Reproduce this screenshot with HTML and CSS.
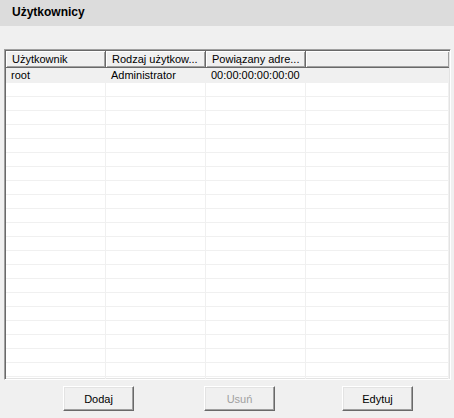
FILE: index.html
```html
<!DOCTYPE html>
<html>
<head>
<meta charset="utf-8">
<link rel="stylesheet" href="styles.css">
</head>
<body>
<div class="title">Użytkownicy</div>
<div class="panel">
  <div class="list">
    <div class="hdr">Użytkownik</div>
    <div class="hdr">Rodzaj użytkow...</div>
    <div class="hdr">Powiązany adre...</div>
    <div class="hdr last"></div>
    <div class="cell sel">root</div>
    <div class="cell sel">Administrator</div>
    <div class="cell sel">00:00:00:00:00:00</div>
    <div class="cell sel"></div>
  </div>
  <div class="rows" id="rows"></div>
</div>
<div class="buttons">
  <button class="btn b1">Dodaj</button>
  <button class="btn b2" disabled>Usuń</button>
  <button class="btn b3">Edytuj</button>
</div>
<script>
  var r = document.getElementById('rows');
  var h = '';
  for (var i = 0; i < 22; i++) {
    h += '<div class="cell"></div><div class="cell"></div><div class="cell"></div><div class="cell"></div>';
  }
  r.innerHTML = h;
</script>
</body>
</html>
```
FILE: styles.css
```css
html, body {
  margin: 0;
  padding: 0;
  background: #f0f0f0;
  font-family: "Liberation Sans", Arial, sans-serif;
  font-size: 11px;
  color: #000;
}
.title {
  height: 26px;
  line-height: 25px;
  background: #dcdcdc;
  font-weight: bold;
  font-size: 12px;
  padding-left: 12px;
}
.panel {
  margin: 23px 0 0 4px;
  width: 443px;
  height: 327px;
  background: #fff;
  border-top: 1px solid #a0a0a0;
  border-left: 1px solid #a0a0a0;
  border-right: 1px solid #fff;
  border-bottom: 1px solid #fff;
  box-shadow: inset 1px 1px 0 #696969, inset -1px -1px 0 #e3e3e3;
  padding: 1px;
  overflow: hidden;
  box-sizing: content-box;
}
.list, .rows {
  display: grid;
  grid-template-columns: 100px 100px 100px 1fr;
}
.hdr {
  height: 17px;
  line-height: 17px;
  background: #f0f0f0;
  box-sizing: border-box;
  padding-left: 6px;
  border-right: 1px solid #696969;
  border-bottom: 1px solid #696969;
  box-shadow: inset 1px 1px 0 #fff, inset -1px -1px 0 #a0a0a0;
  white-space: nowrap;
  overflow: hidden;
}
.hdr.last {
  border-right: none;
}
.cell {
  height: 14px;
  line-height: 13px;
  box-sizing: border-box;
  border-right: 1px solid #f0f0f0;
  border-bottom: 1px solid #f0f0f0;
  padding-left: 5px;
  white-space: nowrap;
}
.cell.sel {
  background: #f0f0f0;
  height: 15px;
  line-height: 15px;
  border-color: #f0f0f0;
}
.buttons {
  display: flex;
  margin-top: 6px;
  padding-left: 63px;
}
.btn {
  width: 71px;
  height: 25px;
  background: #f0f0f0;
  font-family: "Liberation Sans", Arial, sans-serif;
  font-size: 11px;
  color: #000;
  padding: 0;
  border-top: 1px solid #fff;
  border-left: 1px solid #fff;
  border-right: 1px solid #696969;
  border-bottom: 1px solid #696969;
  box-shadow: inset -1px -1px 0 #a0a0a0, inset 1px 1px 0 #e3e3e3;
}
.btn:disabled {
  color: #a0a0a0;
}
.b2 { margin-left: 70px; }
.b3 { margin-left: 67px; }
```
